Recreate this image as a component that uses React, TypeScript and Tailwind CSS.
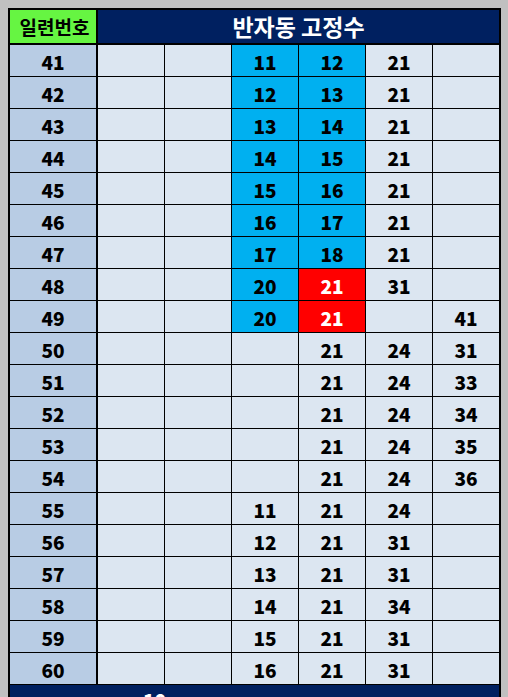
type Cell = { v?: string; c?: "b" | "r" };

const rows: [number, Cell[]][] = [
  [41, [{}, {}, { v: "11", c: "b" }, { v: "12", c: "b" }, { v: "21" }, {}]],
  [42, [{}, {}, { v: "12", c: "b" }, { v: "13", c: "b" }, { v: "21" }, {}]],
  [43, [{}, {}, { v: "13", c: "b" }, { v: "14", c: "b" }, { v: "21" }, {}]],
  [44, [{}, {}, { v: "14", c: "b" }, { v: "15", c: "b" }, { v: "21" }, {}]],
  [45, [{}, {}, { v: "15", c: "b" }, { v: "16", c: "b" }, { v: "21" }, {}]],
  [46, [{}, {}, { v: "16", c: "b" }, { v: "17", c: "b" }, { v: "21" }, {}]],
  [47, [{}, {}, { v: "17", c: "b" }, { v: "18", c: "b" }, { v: "21" }, {}]],
  [48, [{}, {}, { v: "20", c: "b" }, { v: "21", c: "r" }, { v: "31" }, {}]],
  [49, [{}, {}, { v: "20", c: "b" }, { v: "21", c: "r" }, {}, { v: "41" }]],
  [50, [{}, {}, {}, { v: "21" }, { v: "24" }, { v: "31" }]],
  [51, [{}, {}, {}, { v: "21" }, { v: "24" }, { v: "33" }]],
  [52, [{}, {}, {}, { v: "21" }, { v: "24" }, { v: "34" }]],
  [53, [{}, {}, {}, { v: "21" }, { v: "24" }, { v: "35" }]],
  [54, [{}, {}, {}, { v: "21" }, { v: "24" }, { v: "36" }]],
  [55, [{}, {}, { v: "11" }, { v: "21" }, { v: "24" }, {}]],
  [56, [{}, {}, { v: "12" }, { v: "21" }, { v: "31" }, {}]],
  [57, [{}, {}, { v: "13" }, { v: "21" }, { v: "31" }, {}]],
  [58, [{}, {}, { v: "14" }, { v: "21" }, { v: "34" }, {}]],
  [59, [{}, {}, { v: "15" }, { v: "21" }, { v: "31" }, {}]],
  [60, [{}, {}, { v: "16" }, { v: "21" }, { v: "31" }, {}]],
];

function bg(c?: "b" | "r") {
  if (c === "b") return "bg-[#00b0f0] text-black";
  if (c === "r") return "bg-[#ff0000] text-white";
  return "bg-[#dce6f1] text-black";
}

export default function App() {
  return (
    <div className="w-full h-[697px] overflow-hidden bg-[#c0c0c0] pl-[8px] pt-[8px] font-['Noto_Sans_CJK_KR',sans-serif]">
      <div className="w-[493px] border-2 border-black border-b-0">
        <div className="flex h-[35px] border-b-2 border-black">
          <div className="w-[88px] bg-[#66f542] border-r-2 border-black flex items-center justify-center text-[19px] font-bold text-black pl-[3px] pt-[1px]">
            일련번호
          </div>
          <div className="flex-1 bg-[#002060] flex items-center justify-center text-[23px] font-bold text-white">
            반자동 고정수
          </div>
        </div>
        {rows.map(([n, cells]) => (
          <div
            key={n}
            className="flex h-[32px] border-b border-black text-[19px] font-black leading-none"
          >
            <div className="w-[88px] bg-[#b8cce4] border-r-2 border-black flex items-center justify-center pt-[1px]">
              {n}
            </div>
            {cells.map((cell, i) => (
              <div
                key={i}
                className={
                  "flex-1 flex items-center justify-center pt-[1px] " +
                  (i < 5 ? "border-r border-black " : "") +
                  bg(cell.c)
                }
              >
                {cell.v}
              </div>
            ))}
          </div>
        ))}
        <div className="h-[32px] bg-[#002060] flex items-start pl-[133px] pt-[5px] text-[19px] font-black text-white leading-none">
          10
        </div>
      </div>
    </div>
  );
}
